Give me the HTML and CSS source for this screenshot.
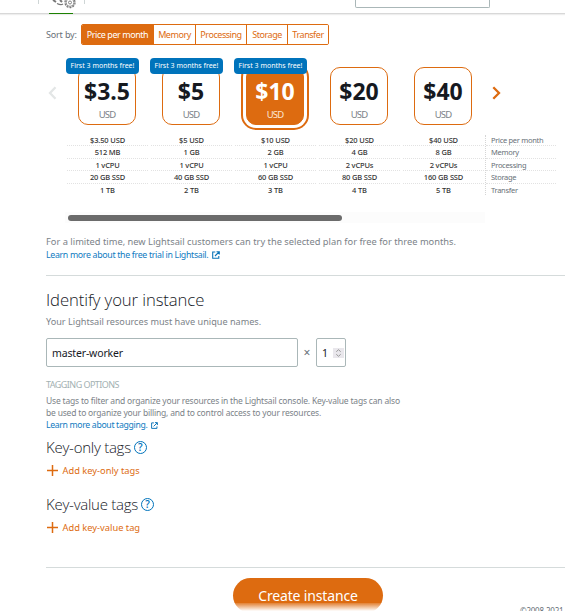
FILE: index.html
```html
<!DOCTYPE html>
<html lang="en">
<head>
<meta charset="utf-8">
<title>Create an instance</title>
<link rel="stylesheet" href="styles.css">
</head>
<body>
<header class="topbar">
  <div class="tab">
    <svg width="31" height="10" viewBox="0 0 31 10" fill="none" stroke="#777" stroke-width="1.1">
      <path d="M5 0l3 2 M12 0l2 2" stroke-width="2"/><path d="M9 3.500q4 2 6 .5"/>
      <circle cx="22" cy="2.500" r="5" stroke-width="1.300" stroke-dasharray="2 1.100"/><circle cx="22" cy="2.500" r="3.900" stroke-width=".8"/><circle cx="22" cy="2.500" r="1.500" stroke-width=".9"/>
    </svg>
  </div>
  <div class="search"></div>
</header>
<main>
  <div class="sort">
    <span class="sort-label">Sort by:</span>
    <div class="segments"><button class="on s1">Price per month</button><button class="s2">Memory</button><button class="s3">Processing</button><button class="s4">Storage</button><button class="s5">Transfer</button></div>
  </div>
  <section class="plans">
    <svg class="prev" width="9" height="14" viewBox="0 0 9 14" fill="none" stroke="#e3e6e6" stroke-width="2.300"><path d="M7.500 1.200L2 7l5.500 5.800"/></svg>
    <div class="plan"><div class="badge">First 3 months free!</div><div class="card"><b>$3.5</b><small>USD</small></div></div>
    <div class="plan"><div class="badge">First 3 months free!</div><div class="card"><b>$5</b><small>USD</small></div></div>
    <div class="plan"><div class="badge">First 3 months free!</div><div class="card selected"><b>$10</b><small>USD</small></div></div>
    <div class="plan"><div class="card"><b>$20</b><small>USD</small></div></div>
    <div class="plan"><div class="card"><b>$40</b><small>USD</small></div></div>
    <svg class="next" width="9" height="14" viewBox="0 0 9 14" fill="none" stroke="#dd6b10" stroke-width="2.300"><path d="M1.300 1.200L7 7l-5.700 5.800"/></svg>
  </section>
  <section class="specs">
    <ul><li>$3.50 USD</li><li>512 MB</li><li>1 vCPU</li><li>20 GB SSD</li><li>1 TB</li></ul>
    <ul><li>$5 USD</li><li>1 GB</li><li>1 vCPU</li><li>40 GB SSD</li><li>2 TB</li></ul>
    <ul><li>$10 USD</li><li>2 GB</li><li>1 vCPU</li><li>60 GB SSD</li><li>3 TB</li></ul>
    <ul><li>$20 USD</li><li>4 GB</li><li>2 vCPUs</li><li>80 GB SSD</li><li>4 TB</li></ul>
    <ul><li>$40 USD</li><li>8 GB</li><li>2 vCPUs</li><li>160 GB SSD</li><li>5 TB</li></ul>
    <ul class="labels"><li>Price per month</li><li>Memory</li><li>Processing</li><li>Storage</li><li>Transfer</li></ul>
  </section>
  <div class="track"><div class="thumb"></div></div>
  <p class="offer">For a limited time, new Lightsail customers can try the selected plan for free for three months.</p>
  <a class="link trial">Learn more about the free trial in Lightsail.<svg width="8" height="8" viewBox="0 0 8 8" fill="none" stroke="#0a74b8" stroke-width="1.100"><path d="M3.300 1H.700v6.300h6.100V5M3 5L7 1M4.500.700h2.800v2.800"/></svg></a>
  <hr>
  <h1>Identify your instance</h1>
  <p class="unique">Your Lightsail resources must have unique names.</p>
  <div class="fields">
    <div class="field name">master-worker</div><span class="times">×</span>
    <div class="field count">1<svg width="11" height="10" viewBox="0 0 11 10"><path fill="#e9e7ec" d="M0 0h11v10H0z"/><path d="M3.300 3.700L5.500 1.700l2.200 2M3.300 6.300l2.200 2 2.200-2" fill="none" stroke="#999" stroke-width="1"/></svg></div>
  </div>
  <div class="caps">TAGGING OPTIONS</div>
  <p class="tagging">Use tags to filter and organize your resources in the Lightsail console. Key-value tags can also<br>be used to organize your billing, and to control access to your resources.</p>
  <a class="link tagmore">Learn more about tagging.<svg width="7" height="7" viewBox="0 0 8 8" fill="none" stroke="#0a74b8" stroke-width="1.100"><path d="M3.300 1H.700v6.300h6.100V5M3 5L7 1M4.500.700h2.800v2.800"/></svg></a>
  <h2 class="h-only">Key-only tags<span class="help">?</span></h2>
  <div class="add a-only"><svg width="12" height="11" viewBox="0 0 12 11"><path d="M6.500 0v11M1 5.500h11" stroke="#dd6b10" stroke-width="1.500"/></svg><span>Add key-only tags</span></div>
  <h2 class="h-value">Key-value tags<span class="help">?</span></h2>
  <div class="add a-value"><svg width="12" height="11" viewBox="0 0 12 11"><path d="M6.500 0v11M1 5.500h11" stroke="#dd6b10" stroke-width="1.500"/></svg><span>Add key-value tag</span></div>
  <hr class="last">
  <div class="actions"><button class="create">Create instance</button><span class="copyright">©2008-2021</span></div>
</main>
</body>
</html>
```

FILE: styles.css
```css
* { box-sizing: border-box; }
html, body { height: 611px; overflow: hidden; }
body { margin: 0; background: #fff; color: #16191f; font-family: "Noto Sans", "Open Sans", sans-serif; white-space: nowrap; }
p, h1, h2, ul { margin: 0; padding: 0; font-weight: 400; }
li { list-style: none; }
button { font-family: inherit; padding: 0; margin: 0; }
svg { flex: none; display: block; }
.topbar { height: 14px; border-bottom: 1px solid #d8d8d8; box-shadow: 0 1px 1px #eee; display: flex; align-items: flex-start; padding-left: 38px; }
.tab { width: 45px; height: 14px; padding-left: 10px; position: relative; }
.tab::before { content: ""; position: absolute; left: 0; top: 0; width: 45px; height: 4px; border: solid #cfd6d6; border-width: 0 1px; }
.tab::after { content: ""; position: absolute; left: 11px; bottom: 0; width: 24px; height: 1px; background: #1d8102; }
.search { width: 135px; height: 8px; margin-left: 272px; border: 1px solid #aab7b8; border-top: 0; border-radius: 0 0 2px 2px; }
main { padding-left: 46px; }
.sort { display: flex; margin-top: 10px; height: 21px; align-items: center; font-size: 9px; }
.sort-label { width: 35px; color: #687078; letter-spacing: -.16px; }
.segments { display: flex; width: 248px; height: 21px; border: 1px solid #dd6b10; border-radius: 2px; overflow: hidden; }
.segments button { border: 0; border-right: 1px solid #dd6b10; background: #fff; color: #dd6b10; font-size: 9px; letter-spacing: -.45px; }
.segments .on { background: #dd6b10; color: #fff; }
.s1 { width: 72px; } .s2 { width: 42px; } .s3 { width: 51px; } .s4 { width: 41px; }
.segments .s5 { flex: 1; border-right: 0; }
.plans { display: flex; height: 90px; align-items: flex-start; }
.prev { margin: 41px 8px 0 2px; }
.next { margin: 41px 0 0 7px; }
.plan { width: 84px; height: 90px; position: relative; padding: 22px 0 0 13px; }
.badge { position: absolute; z-index: 2; left: 1px; top: 13px; width: 73px; height: 16px; border-radius: 4px; background: #0073bb; color: #fff; font-size: 7px; line-height: 16px; text-align: center; }
.card { width: 58px; height: 58px; border: 1px solid #dd6b10; border-radius: 10px; text-align: center; display: flex; flex-direction: column; }
.card b { font-size: 23px; line-height: 24px; margin: 11px -4px 0; }
.card small { font-size: 9.500px; line-height: 12px; color: #7b8288; margin-top: 6px; letter-spacing: -.9px; }
.card.selected { background: #dd6b10; color: #fff; box-shadow: 0 0 0 3px #fff, 0 0 0 5px #dd6b10; }
.card.selected small { color: #fbe5d3; }
.specs { display: flex; height: 60px; padding-left: 21px; }
.specs ul { width: 81px; margin-right: 3px; display: grid; grid-template-rows: 11px 13px 12px 13px 11px; }
.specs li { border-bottom: 1px dotted #e2e2e2; font-size: 7.500px; line-height: 12px; font-weight: 500; text-align: center; letter-spacing: -.15px; color: #333; }
.specs li:first-child { line-height: 10px; }
.specs li:last-child { border-bottom: 0; }
.specs .labels { width: 71px; margin-left: -2px; border-left: 1px dotted #d5d5d5; }
.specs .labels li { text-align: left; padding-left: 5px; color: #687078; font-weight: 400; font-size: 7.500px; letter-spacing: -.3px; }
.track { width: 420px; height: 11px; margin: 17px 0 0 19px; background: #fcfcfc; padding: 3px; }
.thumb { width: 274px; height: 6px; border-radius: 3px; background: #6b6b6b; }
.offer { margin-top: 12px; height: 13px; line-height: 13px; font-size: 9.300px; color: #7b8288; }
.link { display: flex; align-items: center; color: #0f7bbf; }
.link svg { margin-left: 4px; }
.trial { height: 13px; font-size: 8.800px; letter-spacing: -.32px; }
hr { border: 0; height: 1px; background: #d5dbdb; margin: 14px 0 0; }
h1, h2 { font-family: "Open Sans", "Noto Sans", sans-serif; font-weight: 300; }
h1 { font-size: 16.700px; line-height: 22px; margin-top: 13px; letter-spacing: -.1px; }
.unique { font-size: 9.150px; line-height: 13px; margin-top: 4px; color: #7b8288; }
.fields { display: flex; align-items: center; height: 29px; margin-top: 10px; font-size: 10.500px; }
.field { height: 29px; border: 1px solid #aab7b8; border-radius: 2px; display: flex; align-items: center; padding-left: 5px; }
.name { width: 252px; letter-spacing: -.15px; }
.times { width: 18px; text-align: center; color: #687078; font-size: 12px; }
.count { width: 30px; justify-content: space-between; padding-right: 1px; }
.caps { margin-top: 12px; height: 12px; line-height: 12px; font-size: 9px; letter-spacing: -.55px; color: #a3b1b2; }
.tagging { margin-top: 4px; font-size: 8.500px; line-height: 12px; color: #7b8288; letter-spacing: -.19px; }
.tagmore { height: 12px; font-size: 8.700px; letter-spacing: -.33px; }
h2 { display: flex; align-items: center; height: 18px; font-size: 15px; letter-spacing: -.26px; }
.h-only { margin-top: 7px; }
.h-value { margin-top: 18px; }
.help { width: 13px; height: 13px; border: 1px solid #0073bb; border-radius: 50%; color: #0073bb; font-size: 10px; line-height: 11px; font-weight: 600; text-align: center; margin-left: 3px; letter-spacing: 0; }
.add { display: flex; align-items: center; height: 14px; margin-top: 7px; color: #dd6b10; font-size: 9.300px; }
.add span { margin-left: 4.500px; }
.last { margin-top: 33px; }
.actions { display: flex; height: 43px; position: relative; overflow: hidden; }
.create { width: 150px; height: 35px; margin: 10px 0 0 187px; border: 0; border-radius: 18px; background: #dd6b10; color: #fff; font-size: 14px; letter-spacing: -.15px; }
.copyright { margin: 37px 0 0 137px; font-size: 8px; line-height: 11px; color: #687078; letter-spacing: -.25px; }
.actions::after { content: ""; position: absolute; left: 0; top: 35px; width: 400px; height: 8px; background: linear-gradient(rgba(255,255,255,.15), #fff); }
```
